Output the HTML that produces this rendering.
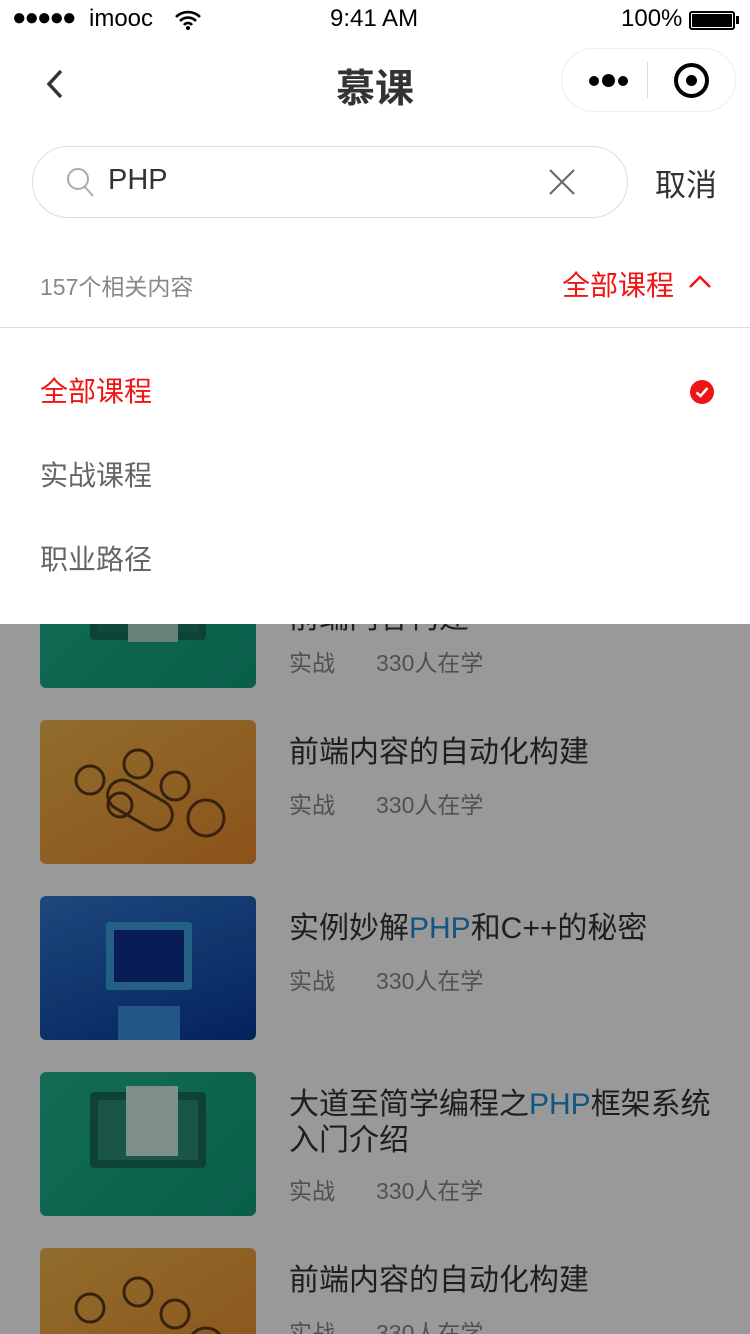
<!DOCTYPE html>
<html><head><meta charset="utf-8"><style>
*{margin:0;padding:0;box-sizing:border-box}
html,body{width:750px;height:1334px;overflow:hidden}
body{position:relative;background:#fff;font-family:"Liberation Sans","Noto Sans CJK SC",sans-serif;color:#333}
.abs{position:absolute}
.item{position:absolute;left:0;width:750px;height:144px}
.thumb{position:absolute;left:40px;top:0;width:216px;height:144px;border-radius:6px;overflow:hidden}
.t{position:absolute;left:289px;font-size:30px;color:#333;line-height:36px;width:430px}
.m{position:absolute;left:289px;font-size:23px;color:#888}
.m span{margin-left:41px}
.hl{color:#1a8fd8}
.mon{position:absolute;left:50px;top:20px;width:116px;height:76px;border-radius:4px}
</style></head><body>
<div class="item" style="top:544px"><div class="thumb" style="background:linear-gradient(135deg,#1fb58b,#0f9e7a)"><div class="mon" style="background:#1d7a63;border:8px solid #147058"><div style="position:absolute;left:30px;top:10px;width:50px;height:60px;background:#a9d8c8"></div></div></div>
<div class="m" style="top:100px">实战<span>330人在学</span></div></div>
<div class="item" style="top:720px"><div class="thumb" style="background:linear-gradient(150deg,#f2b64a,#e88a2c)">
<svg width="216" height="144"><g fill="none" stroke="#5a3a1a" stroke-width="3"><circle cx="50" cy="60" r="14"/><circle cx="98" cy="44" r="14"/><circle cx="135" cy="66" r="14"/><circle cx="166" cy="98" r="18"/><circle cx="80" cy="85" r="12"/><rect x="65" y="70" width="70" height="30" rx="15" transform="rotate(30 100 85)"/></g></svg></div>
<div class="t" style="top:15px">前端内容的自动化构建</div><div class="m" style="top:66px">实战<span>330人在学</span></div></div>
<div class="item" style="top:896px"><div class="thumb" style="background:linear-gradient(160deg,#2f7ad0,#083a9a)"><div style="position:absolute;left:66px;top:26px;width:86px;height:68px;background:#3aa0e0;border-radius:3px"><div style="position:absolute;left:8px;top:8px;width:70px;height:52px;background:#0f2f8f"></div></div><div style="position:absolute;left:78px;top:110px;width:62px;height:34px;background:#3b8fe0"></div></div>
<div class="t" style="top:15px">实例妙解<span class="hl">PHP</span>和C++的秘密</div><div class="m" style="top:66px">实战<span>330人在学</span></div></div>
<div class="item" style="top:1072px"><div class="thumb" style="background:linear-gradient(135deg,#1fb58b,#0f9e7a)"><div class="mon" style="background:#2a8f75;border:8px solid #1a6e5a"><div style="position:absolute;left:28px;top:-14px;width:52px;height:70px;background:#d3ede4"></div></div></div>
<div class="t" style="top:15px;width:425px">大道至简学编程之<span class="hl">PHP</span>框架系统入门介绍</div><div class="m" style="top:100px">实战<span>330人在学</span></div></div>
<div class="item" style="top:1248px"><div class="thumb" style="background:linear-gradient(150deg,#f2b64a,#e88a2c)"><svg width="216" height="144"><g fill="none" stroke="#5a3a1a" stroke-width="3"><circle cx="50" cy="60" r="14"/><circle cx="98" cy="44" r="14"/><circle cx="135" cy="66" r="14"/><circle cx="166" cy="98" r="18"/></g></svg></div>
<div class="t" style="top:15px">前端内容的自动化构建</div><div class="m" style="top:66px">实战<span>330人在学</span></div></div>
<div class="abs" style="left:289px;top:593px;font-size:30px;color:#333">前端内容构建</div>
<div class="abs" style="left:0;top:0;width:750px;height:1334px;background:rgba(0,0,0,0.4)"></div>
<div class="abs" style="left:0;top:0;width:750px;height:624px;background:#fff">
<div class="abs" style="left:12px;top:4px;font-size:24px;color:#000;letter-spacing:-2px">●●●●●</div>
<div class="abs" style="left:89px;top:5px;font-size:24px;color:#000">imooc</div>
<svg class="abs" style="left:174px;top:10px" width="28" height="20" viewBox="0 0 28 20"><path d="M2 7a17 17 0 0 1 24 0M6 11a11 11 0 0 1 16 0M10 15a5 5 0 0 1 8 0" stroke="#000" stroke-width="2.6" fill="none"/><circle cx="14" cy="18" r="2" fill="#000"/></svg>
<div class="abs" style="left:330px;top:5px;font-size:24px;color:#000">9:41 AM</div>
<div class="abs" style="left:621px;top:5px;font-size:24px;color:#000">100%</div>
<div class="abs" style="left:689px;top:11px;width:46px;height:19px;border:2px solid #000;border-radius:3px;padding:1px"><div style="width:100%;height:100%;background:#000"></div></div>
<div class="abs" style="left:736px;top:16px;width:3px;height:8px;background:#000"></div>
<svg class="abs" style="left:44px;top:68px" width="20" height="32"><path d="M17 3 5 16l12 13" stroke="#333" stroke-width="3.5" fill="none"/></svg>
<div class="abs" style="left:0;width:750px;top:58px;text-align:center;font-size:39px;font-weight:bold;color:#333">慕课</div>
<div class="abs" style="left:561px;top:48px;width:175px;height:64px;border:1px solid #eee;border-radius:32px"></div>
<div class="abs" style="left:647px;top:62px;width:1px;height:36px;background:#ddd"></div>
<div class="abs" style="left:589px;top:76px;width:10px;height:10px;border-radius:50%;background:#000"></div>
<div class="abs" style="left:602px;top:74px;width:13px;height:13px;border-radius:50%;background:#000"></div>
<div class="abs" style="left:618px;top:76px;width:10px;height:10px;border-radius:50%;background:#000"></div>
<div class="abs" style="left:674px;top:63px;width:35px;height:35px;border-radius:50%;border:4px solid #000"></div>
<div class="abs" style="left:686px;top:75px;width:11px;height:11px;border-radius:50%;background:#000"></div>
<div class="abs" style="left:32px;top:146px;width:596px;height:72px;border:1px solid #ddd;border-radius:36px"></div>
<svg class="abs" style="left:66px;top:166px" width="30" height="32"><circle cx="12" cy="13" r="10" stroke="#aaa" stroke-width="2" fill="none"/><path d="M19 21l8 9" stroke="#aaa" stroke-width="2"/></svg>
<div class="abs" style="left:108px;top:164px;font-size:29px;color:#333">PHP</div>
<svg class="abs" style="left:548px;top:168px" width="28" height="28"><path d="M2 2l24 24M26 2 2 26" stroke="#666" stroke-width="2"/></svg>
<div class="abs" style="left:655px;top:160px;font-size:31px;color:#333">取消</div>
<div class="abs" style="left:40px;top:268px;font-size:23px;color:#888">157个相关内容</div>
<div class="abs" style="left:562px;top:264px;font-size:28px;color:#f01414">全部课程</div>
<svg class="abs" style="left:688px;top:274px" width="24" height="16"><path d="M2 13 12 3l10 10" stroke="#f01414" stroke-width="2.5" fill="none"/></svg>
<div class="abs" style="left:0;top:327px;width:750px;height:1px;background:#ddd"></div>
<div class="abs" style="left:40px;top:370px;font-size:28px;color:#f01414">全部课程</div>
<div class="abs" style="left:690px;top:380px;width:24px;height:24px;border-radius:50%;background:#f01414"></div>
<svg class="abs" style="left:690px;top:380px" width="24" height="24"><path d="M6.5 12.5l4 3.5 7-8" stroke="#fff" stroke-width="2.5" fill="none"/></svg>
<div class="abs" style="left:40px;top:454px;font-size:28px;color:#666">实战课程</div>
<div class="abs" style="left:40px;top:538px;font-size:28px;color:#666">职业路径</div>
</div>
</body></html>
